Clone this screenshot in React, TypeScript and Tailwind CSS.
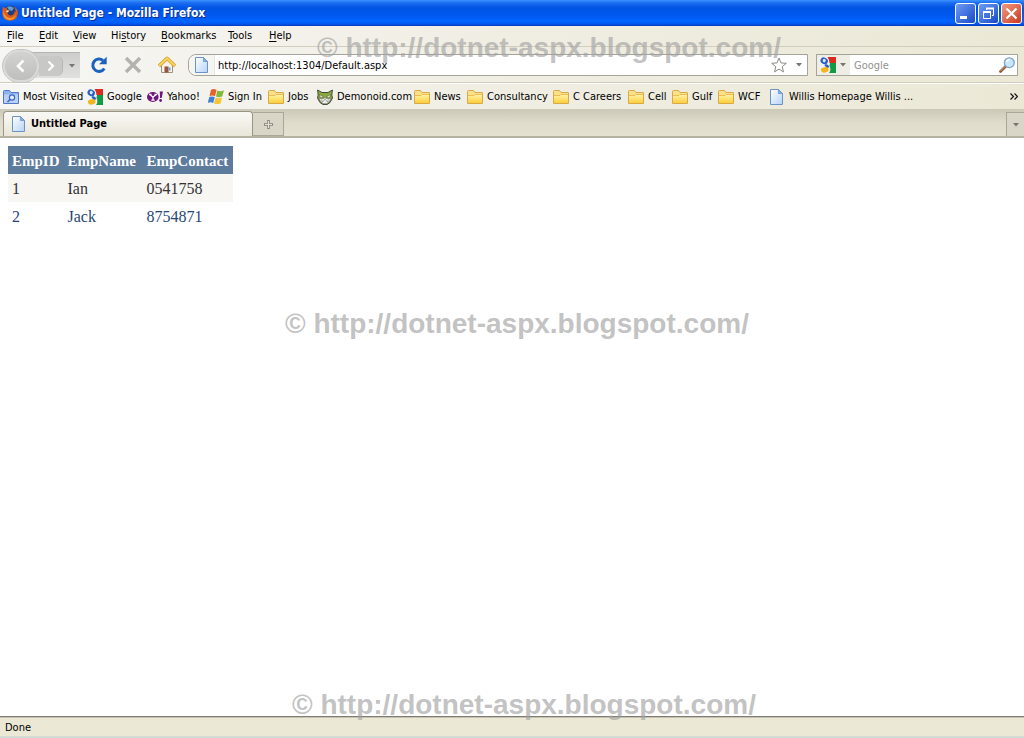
import React, { useState } from "react";

type IconProps = { className?: string };

function PageIcon({ className = "" }: IconProps) {
  return (
    <svg viewBox="0 0 16 16" className={`h-4 w-4 shrink-0 ${className}`} aria-hidden="true">
      <defs>
        <linearGradient id="pageFill" x1="0" y1="0" x2="1" y2="1">
          <stop offset="0" stopColor="#ffffff" />
          <stop offset="1" stopColor="#b5d4f7" />
        </linearGradient>
      </defs>
      <path d="M1.500.5h8l4 4v11h-12z" fill="url(#pageFill)" stroke="#6c93c6" />
      <path d="M9.500.5v4h4z" fill="#7fb0ec" stroke="#6c93c6" strokeWidth=".8" />
    </svg>
  );
}

function FolderIcon() {
  return (
    <svg viewBox="0 0 16 16" className="h-4 w-4 shrink-0" aria-hidden="true">
      <defs>
        <linearGradient id="folderFill" x1="0" y1="0" x2="0" y2="1">
          <stop offset="0" stopColor="#fff3a8" />
          <stop offset="1" stopColor="#fccf3a" />
        </linearGradient>
      </defs>
      <path d="M.5 14.500v-12q0-1 1-1h5l1.500 2h7q.5 0 .5.5v10.500z" fill="#fbe08a" stroke="#d9a848" />
      <path d="M1 14V6.500h6l1-1h7V14z" fill="url(#folderFill)" />
      <path d="M1 6.500h6l1-1h7" fill="none" stroke="#e2ab3c" strokeWidth=".7" />
    </svg>
  );
}

function SmartFolderIcon() {
  return (
    <svg viewBox="0 0 16 16" className="h-4 w-4 shrink-0" aria-hidden="true">
      <path d="M.5 14.500v-12q0-1 1-1h5l1.500 2h7.500v11z" fill="#8fb4f2" stroke="#5079c8" />
      <path d="M1 14V5.500h14V14z" fill="#b9d1fa" />
      <circle cx="9" cy="8.500" r="2.600" fill="#e4eefd" stroke="#3b67bd" strokeWidth="1.200" />
      <path d="M7 10.500 4.500 13" stroke="#3b67bd" strokeWidth="1.600" />
    </svg>
  );
}

function GoogleIcon() {
  return (
    <svg viewBox="0 0 16 16" className="h-4 w-4 shrink-0" aria-hidden="true">
      <path d="M0 0h9v16H0z" fill="#eef3fb" />
      <path d="M7.500 0H16v6H9.500q0-3-2-6z" fill="#dc2c1c" />
      <path d="M10 6h6v10H9q2.500-3 .5-7z" fill="#139a43" />
      <ellipse cx="4.200" cy="3.800" rx="3.800" ry="3.200" fill="#2c5fc4" transform="rotate(25 4.200 3.800)" />
      <ellipse cx="4.200" cy="3.600" rx="1.500" ry="1.800" fill="#dce8fa" />
      <path d="M5.500 7q3.500.5 3.500 3L7.500 11.500 4.500 8.500z" fill="#2c5fc4" />
      <ellipse cx="4.700" cy="12.800" rx="3.900" ry="2.700" fill="#f5b61c" transform="rotate(-12 4.700 12.800)" />
    </svg>
  );
}

function YahooIcon() {
  return (
    <svg viewBox="0 0 16 16" className="h-4 w-4 shrink-0" aria-hidden="true">
      <ellipse cx="5.800" cy="8" rx="5.800" ry="5" fill="#6f167f" />
      <path d="m3 5.500 3 2.700 3-2.700M6 8.200v3M4.300 11.200h3.400M2 5.500h2.500M7.500 5.500H10" fill="none" stroke="#fff" strokeWidth="1.300" />
      <path d="M12.700 2.500H16l-1.300 6.500h-1.600z" fill="#6f167f" />
      <circle cx="13.600" cy="11.500" r="1.400" fill="#6f167f" />
    </svg>
  );
}

function WindowsIcon() {
  return (
    <svg viewBox="0 0 16 16" className="h-4 w-4 shrink-0" aria-hidden="true">
      <path d="M3 .8Q5.800-.7 8.500 1L7 7.200Q4.500 5.700 1.500 7z" fill="#e8632c" />
      <path d="M9.300 1.500q3 1.500 6.700-.2l-1.700 6q-3 1.500-6.300.3z" fill="#82b93c" />
      <path d="M1.300 8Q4 6.700 6.800 8.200L5.200 14Q2.800 12.500-.3 13.800z" fill="#4180d6" />
      <path d="M7.700 8.600q3.300 1.300 6.300-.2l-1.500 6q-3.300 1.400-6.500 0z" fill="#f6c435" />
    </svg>
  );
}

function DemonoidIcon() {
  return (
    <svg viewBox="0 0 16 16" className="h-4 w-4 shrink-0" aria-hidden="true">
      <path d="m.6 1 4.400 2.500h6L15.400 1l-.6 5 .7 3-2.500 4.500-3 2H6l-3-2L.5 9l.7-3z" fill="#8aa63f" stroke="#454b37" />
      <path d="m2.500 5.500 4 2.300L3.500 9zM13.500 5.500l-4 2.300 3 1.200z" fill="#f4f7df" stroke="#45502b" strokeWidth=".5" />
      <path d="m1.700 9.300 3.300.5 3-1 3 1 3.300-.5-2.300 3.700-2.500 1.700h-3L4 13z" fill="#eceee9" stroke="#666" strokeWidth=".6" />
      <path d="m4.500 10.500 1 2.500L8 10l2.500 3 1-2.500" fill="none" stroke="#777e70" strokeWidth=".6" />
    </svg>
  );
}

function FirefoxIcon() {
  return (
    <svg viewBox="0 0 16 16" className="h-4 w-4 shrink-0" aria-hidden="true">
      <circle cx="8.300" cy="7" r="6.600" fill="#1d3f7c" />
      <path d="M5 2q3.500-2 7 1l-2 3-3-1z" fill="#5f9fd8" />
      <path d="M1 1.500 3 3.500l2-1.500-.2 2.500L7.500 5.500 5.800 7.200q-.3 3 2.700 3.300 4 0 3.800-4.300l1.200 1.200q.3-3.500-1.500-6 4.300 2.500 3.800 7.500Q15 15.500 8 15.700 1 15.500.3 9 0 5 1 1.500z" fill="#dc5a1c" />
      <path d="M2 5q-.5 6 5 8 5 .7 7-4-1 6-6.500 6Q1.500 14 1.200 8.500z" fill="#f59a2c" />
      <path d="m4.500 5.500 3 .2L5.800 7l-1.600.2z" fill="#fff0cf" />
    </svg>
  );
}

function HomeIcon() {
  return (
    <svg viewBox="0 0 18 18" className="h-[18px] w-[18px]" aria-hidden="true">
      <path d="M3.500 8v8.500h11V8L9 3z" fill="#f5f2ea" stroke="#9c9482" />
      <path d="M1 10 9 2.300l8 7.700" fill="none" stroke="#d29c2c" strokeWidth="3.400" strokeLinejoin="round" />
      <path d="m1.200 9.700 7.800-7.400 7.800 7.400" fill="none" stroke="#fbd45c" strokeWidth="2" />
      <path d="M6.500 16.500v-6h4v6z" fill="#9c5138" />
      <path d="M10.500 11.500h2v3h-2z" fill="#6f9fce" />
    </svg>
  );
}

function MagnifierIcon() {
  return (
    <svg viewBox="0 0 16 16" className="h-4 w-4" aria-hidden="true">
      <path d="m1.500 14.500 5.500-5.500" stroke="#8e5c3f" strokeWidth="2.800" strokeLinecap="round" />
      <path d="m1.500 14 5-5" stroke="#d19a70" strokeWidth="1" />
      <circle cx="10.300" cy="5.700" r="4.900" fill="#c9e6fb" stroke="#78a3d0" strokeWidth="1.300" />
      <path d="M7.500 5q.7-2.500 3.300-2.500" stroke="#fff" strokeWidth="1.500" fill="none" />
    </svg>
  );
}

function Caret({ className = "" }: IconProps) {
  return (
    <svg viewBox="0 0 6 4" className={`h-1 w-1.5 shrink-0 ${className}`} aria-hidden="true">
      <path d="M0 0h6L3 3.500z" fill="#77776f" />
    </svg>
  );
}

const menus = [
  ["", "F", "ile"],
  ["", "E", "dit"],
  ["", "V", "iew"],
  ["Hi", "s", "tory"],
  ["", "B", "ookmarks"],
  ["", "T", "ools"],
  ["", "H", "elp"],
];

const bookmarks = [
  { label: "Most Visited", icon: <SmartFolderIcon /> },
  { label: "Google", icon: <GoogleIcon /> },
  { label: "Yahoo!", icon: <YahooIcon /> },
  { label: "Sign In", icon: <WindowsIcon /> },
  { label: "Jobs", icon: <FolderIcon /> },
  { label: "Demonoid.com", icon: <DemonoidIcon /> },
  { label: "News", icon: <FolderIcon /> },
  { label: "Consultancy", icon: <FolderIcon /> },
  { label: "C Careers", icon: <FolderIcon /> },
  { label: "Cell", icon: <FolderIcon /> },
  { label: "Gulf", icon: <FolderIcon /> },
  { label: "WCF", icon: <FolderIcon /> },
  { label: "Willis Homepage Willis ...", icon: <PageIcon /> },
];

const employees = [
  { id: 1, name: "Ian", contact: "0541758" },
  { id: 2, name: "Jack", contact: "8754871" },
];

function Watermark({ className }: { className: string }) {
  return (
    <p
      className={`pointer-events-none absolute z-10 font-['Liberation_Sans',Arial,sans-serif] text-[28px] leading-8 font-bold whitespace-nowrap text-[#a0a0a0]/65 ${className}`}
    >
      © http://dotnet-aspx.blogspot.com/
    </p>
  );
}

function TitleBar() {
  const button = "flex h-[21px] w-[21px] items-center justify-center rounded-[3px] border border-white";
  return (
    <div className="flex h-[26px] items-center bg-[linear-gradient(#3b93ff_0,#1a6cf0_3px,#0054e3_8px,#0058f0_16px,#0266ff_21px,#0058ee_24px,#0037b8_26px)] pr-0.5 pl-0.5">
      <FirefoxIcon />
      <h1 className="ml-[3px] flex-1 text-xs leading-4 font-bold text-white [text-shadow:1px_1px_#0a2d8c]">
        Untitled Page - Mozilla Firefox
      </h1>
      <div className="flex gap-0.5">
        <button aria-label="Minimize" className={`${button} bg-linear-to-br from-[#6f9cf5] to-[#1848c8]`}>
          <svg viewBox="0 0 19 19" className="h-[19px] w-[19px]"><path d="M4 12h7v3H4z" fill="#fff" /></svg>
        </button>
        <button aria-label="Restore" className={`${button} bg-linear-to-br from-[#6f9cf5] to-[#1848c8]`}>
          <svg viewBox="0 0 19 19" className="h-[19px] w-[19px]" fill="none" stroke="#fff">
            <path d="M4.500 8v6.500h7V8M7.500 6V4.500h7v7H13" />
            <path d="M4 8h8M7 4.500h8" strokeWidth="2" />
          </svg>
        </button>
        <button aria-label="Close" className={`${button} bg-linear-to-br from-[#f09a80] to-[#c8351a]`}>
          <svg viewBox="0 0 19 19" className="h-[19px] w-[19px]"><path d="m4.500 4.500 10 10m0-10-10 10" stroke="#fff" strokeWidth="2.200" /></svg>
        </button>
      </div>
    </div>
  );
}

function NavigationBar() {
  const [address, setAddress] = useState("http://localhost:1304/Default.aspx");
  const [query, setQuery] = useState("");
  return (
    <div className="flex h-9 items-center border-b border-[#d2cebe] pt-px pr-1.5 pl-[3px]">
      <div className="flex h-[26px] w-[77px] items-center rounded-l-full rounded-r-xl border-t border-[#b4b4b2] bg-linear-to-b from-[#cdcdcb] to-[#e0e0de]">
        <button aria-label="Back" className="flex h-8 w-9 shrink-0 items-center justify-center rounded-full border-2 border-[#dadad8] bg-linear-to-b from-[#d2d2d0] to-[#bfbfbd] outline outline-[#c4c4c1]">
          <svg viewBox="0 0 14 14" className="h-3.5 w-3.5"><path d="M9.500 1.500 4 7l5.500 5.500" fill="none" stroke="#fff" strokeWidth="2.600" /></svg>
        </button>
        <button aria-label="Forward" className="flex h-5 w-6 items-center justify-center rounded-r-md border-r border-[#b8b8b5] bg-[#c8c8c6]">
          <svg viewBox="0 0 12 12" className="h-3 w-3"><path d="M3.500 1.500 8 6l-4.500 4.500" fill="none" stroke="#fff" strokeWidth="2.200" /></svg>
        </button>
        <button aria-label="Recent pages" className="flex h-5 flex-1 items-center justify-center"><Caret /></button>
      </div>
      <button aria-label="Reload" className="ml-2.5 flex h-5 w-[18px] items-center justify-center">
        <svg viewBox="0 0 18 18" className="h-[18px] w-[18px]">
          <path d="M14.300 12.500A6.200 6.200 0 1 1 13 4.500" fill="none" stroke="#1c62bd" strokeWidth="3" />
          <path d="M16.700.8v7.500H9z" fill="#1c62bd" />
        </svg>
      </button>
      <button aria-label="Stop" className="ml-4 flex h-5 w-[18px] items-center justify-center">
        <svg viewBox="0 0 18 18" className="h-[18px] w-[18px]"><path d="m2 2 14 14M16 2 2 16" stroke="#b3b2af" strokeWidth="3.400" /></svg>
      </button>
      <button aria-label="Home" className="ml-4 flex h-5 w-[18px] items-center justify-center"><HomeIcon /></button>
      <div className="ml-3 flex h-[22px] min-w-0 flex-1 items-center rounded-l-lg border border-[#a5a498] bg-white">
        <span className="flex h-5 w-[26px] shrink-0 items-center justify-center rounded-l-lg border-r border-[#e6e6df] bg-[#f5f5f1]"><PageIcon /></span>
        <input
          aria-label="Address"
          className="h-5 min-w-0 flex-1 bg-transparent pl-[3px] outline-none"
          value={address}
          onChange={(e) => setAddress(e.target.value)}
        />
        <button aria-label="Bookmark this page" className="flex h-5 w-4 items-center">
          <svg viewBox="0 0 16 16" className="h-4 w-4"><path d="m8 1 2 4.900 5.300.4-4.100 3.400 1.300 5.200L8 12.100l-4.500 2.800 1.300-5.200L.7 6.300 6 5.900z" fill="#fff" stroke="#8b8b86" /></svg>
        </button>
        <button aria-label="Show history" className="flex h-5 w-5 items-center justify-center pl-1"><Caret /></button>
      </div>
      <div className="ml-2 flex h-[22px] w-[202px] items-center border border-[#a5a498] bg-white">
        <button aria-label="Search engine" className="flex h-5 w-[33px] items-center gap-1 bg-[#efeee6] pl-[3px]"><GoogleIcon /><Caret /></button>
        <input
          aria-label="Search"
          className="h-5 min-w-0 flex-1 bg-transparent pl-1 outline-none placeholder:text-[#929292] placeholder:opacity-100"
          placeholder="Google"
          value={query}
          onChange={(e) => setQuery(e.target.value)}
        />
        <button aria-label="Go" className="flex h-5 w-[18px] items-center"><MagnifierIcon /></button>
      </div>
    </div>
  );
}

export default function App() {
  return (
    <div className="flex min-h-screen flex-col bg-white font-['DejaVu_Sans_Condensed','DejaVu_Sans',Tahoma,sans-serif] text-[11px] leading-4 text-black">
      <header className="relative bg-linear-to-r from-[#f6f6f4] via-[#f0eee3] to-[#ebe8d6]">
        <TitleBar />
        <nav aria-label="Menu" className="grid h-[21px] grid-cols-[32px_34px_38px_50px_67px_41px_1fr] items-center border-b border-[#d2cebe] pl-[7px]">
          {menus.map(([before, key, after]) => (
            <button key={before + key + after} className="text-left whitespace-nowrap">
              {before}<span className="underline underline-offset-2">{key}</span>{after}
            </button>
          ))}
        </nav>
        <NavigationBar />
        <div className="flex h-[26px] items-center border-t border-white pr-1.5 pl-[3px]">
          <nav aria-label="Bookmarks" className="grid flex-1 grid-cols-[84px_60px_61px_60px_49px_97px_53px_86px_75px_44px_46px_51px_1fr]">
            {bookmarks.map(({ label, icon }) => (
              <a key={label} href="#" className="flex items-center gap-1 whitespace-nowrap">{icon}{label}</a>
            ))}
          </nav>
          <button aria-label="More bookmarks">
            <svg viewBox="0 0 8 7" className="h-[7px] w-2"><path d="m.5.5 3 3-3 3m4-6 3 3-3 3" fill="none" stroke="#111" strokeWidth="1.200" /></svg>
          </button>
        </div>
        <div className="flex h-[29px] items-end border-b-2 border-[#b5b2a2] bg-linear-to-b from-[#cbc8b7] via-[#dfdccb] to-[#e4e1d0] pl-[3px]">
          <button className="flex h-[25px] w-[250px] items-center gap-1 rounded-t-sm border border-b-0 border-[#98958a] bg-linear-to-b from-[#f9f9f5] to-[#e9e6d9] pl-[7px] font-bold">
            <PageIcon />Untitled Page
          </button>
          <button aria-label="New tab" className="flex h-6 w-[31px] items-center justify-center border border-l-0 border-[#aaa798] bg-[#d9d6c8]">
            <svg viewBox="0 0 9 9" className="h-[9px] w-[9px]"><path d="M4.500 0v9M0 4.500h9" stroke="#84827a" strokeWidth="2.500" /><path d="M4.500 1v7M1 4.500h7" stroke="#e5e3db" /></svg>
          </button>
          <button aria-label="List all tabs" className="ml-auto flex h-6 w-[18px] items-center justify-center border-t border-l border-[#aaa798] bg-[#d9d6c8]"><Caret /></button>
        </div>
        <Watermark className="top-8 left-[317px]" />
      </header>

      <main className="relative flex-1 p-2">
        <table className="border-collapse font-['Liberation_Serif','Times_New_Roman',serif] text-base leading-5">
          <thead>
            <tr className="bg-[#5d7b9d] text-left text-[15px] text-white">
              <th className="w-[55px] px-1 pt-[5px] pb-[3px]">EmpID</th>
              <th className="w-[79px] px-1 pt-[5px] pb-[3px]">EmpName</th>
              <th className="w-[90px] pt-[5px] pr-[3px] pb-[3px] pl-1">EmpContact</th>
            </tr>
          </thead>
          <tbody>
            {employees.map(({ id, name, contact }) => (
              <tr key={id} className="bg-[#f7f6f3] text-[#333333] even:bg-white even:text-[#284775]">
                <td className="px-1 pt-[5px] pb-[3px]">{id}</td>
                <td className="px-1 pt-[5px] pb-[3px]">{name}</td>
                <td className="px-1 pt-[5px] pb-[3px]">{contact}</td>
              </tr>
            ))}
          </tbody>
        </table>
        <Watermark className="top-[170px] left-[285px]" />
      </main>

      <footer className="relative flex h-[22px] items-center border-t border-[#7f7d73] bg-[#ebe8d6] pl-[5px] shadow-[inset_0_1px_#c5c2b2,inset_0_-2px_#d3dbd5]">
        <p>Done</p>
        <Watermark className="-top-7 left-[292px]" />
      </footer>
    </div>
  );
}
